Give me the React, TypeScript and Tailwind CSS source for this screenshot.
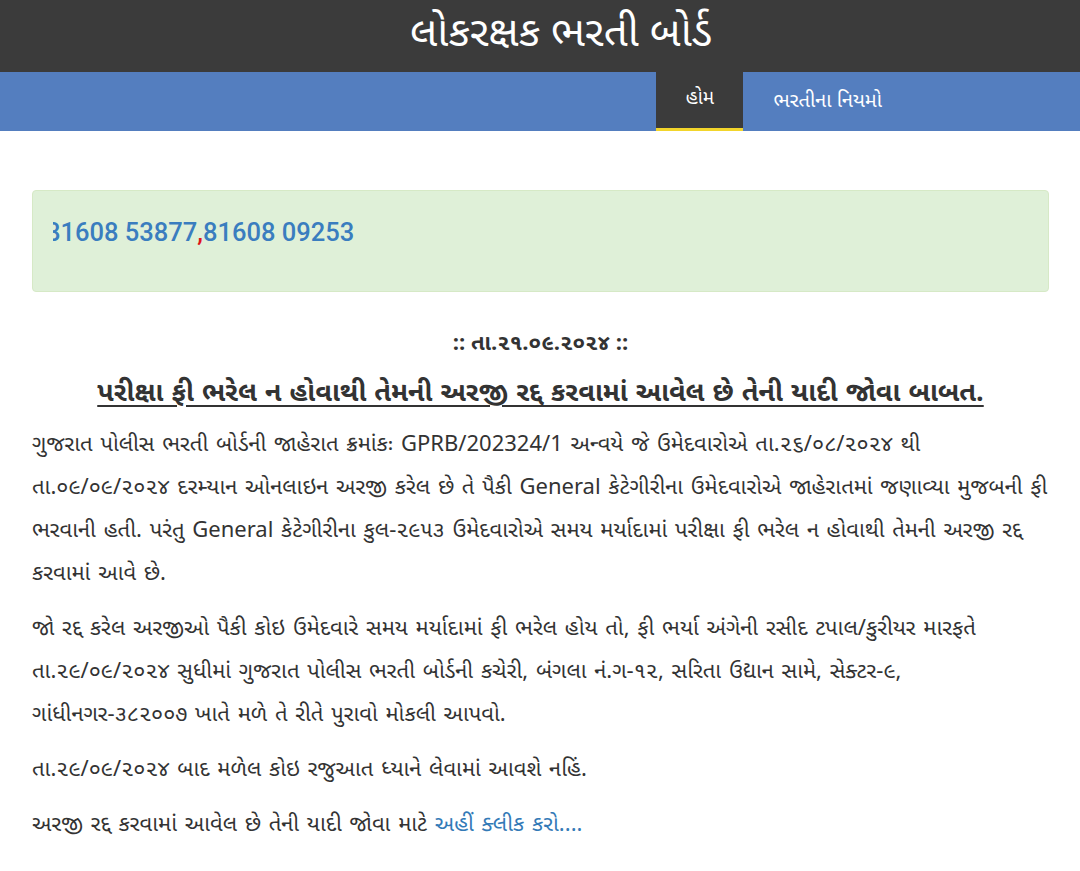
import React from 'react';

const font = "font-['Noto_Sans_Gujarati','Noto_Sans','Roboto',sans-serif]";

const App: React.FC = () => {
  return (
    <div className={`min-h-screen bg-white text-[#333] ${font}`}>
      {/* Title bar */}
      <header className="h-[72px] bg-[#3b3b3b] flex items-center justify-center pl-[42px]">
        <h1 className="text-white text-[42px] leading-none">લોકરક્ષક ભરતી બોર્ડ</h1>
      </header>

      {/* Nav */}
      <nav className="h-[59px] bg-[#547ebf] flex justify-end pr-[198px]">
        <a className="w-[87px] h-full bg-[#3b3b3b] border-b-[3px] border-[#f2d52b] flex items-center justify-center text-white text-[19px]">
          હોમ
        </a>
        <a className="h-full flex items-center pl-[30px] text-white text-[20px]">ભરતીના નિયમો</a>
      </nav>

      <main className="px-[32px] pt-[59px] pr-[31px]">
        {/* Marquee box */}
        <div className="h-[102px] bg-[#dff0d8] border border-[#d6e9c6] rounded-[4px] px-[20px] pt-[22px]">
          <div className="overflow-hidden whitespace-nowrap">
            <span className="inline-block -ml-[7px] font-['Roboto',sans-serif] font-medium text-[25.5px] text-[#3a7dbf]">
              81608 53877<span className="text-[#e0131b]">,</span>81608 09253
            </span>
          </div>
        </div>

        <p className="mt-[36px] text-center font-bold text-[22px]">:: તા.૨૧.૦૯.૨૦૨૪ ::</p>
        <h2 className="mt-[14px] text-center font-bold text-[27px] underline underline-offset-4 [word-spacing:1px]">
          પરીક્ષા ફી ભરેલ ન હોવાથી તેમની અરજી રદ્દ કરવામાં આવેલ છે તેની યાદી જોવા બાબત.
        </h2>

        <div className="mt-[8px] text-[22px] leading-[43px] space-y-[12px] [word-spacing:2px] whitespace-nowrap">
          <p>
            ગુજરાત પોલીસ ભરતી બોર્ડની જાહેરાત ક્રમાંકઃ GPRB/202324/1 અન્વયે જે ઉમેદવારોએ તા.૨૬/૦૮/૨૦૨૪ થી
            <br />
            તા.૦૯/૦૯/૨૦૨૪ દરમ્યાન ઓનલાઇન અરજી કરેલ છે તે પૈકી General કેટેગીરીના ઉમેદવારોએ જાહેરાતમાં જણાવ્યા મુજબની ફી
            <br />
            ભરવાની હતી. પરંતુ General કેટેગીરીના કુલ-૨૯૫૩ ઉમેદવારોએ સમય મર્યાદામાં પરીક્ષા ફી ભરેલ ન હોવાથી તેમની અરજી રદ્દ
            <br />
            કરવામાં આવે છે.
          </p>
          <p>
            જો રદ્દ કરેલ અરજીઓ પૈકી કોઇ ઉમેદવારે સમય મર્યાદામાં ફી ભરેલ હોય તો, ફી ભર્યા અંગેની રસીદ ટપાલ/કુરીયર મારફતે
            <br />
            તા.૨૯/૦૯/૨૦૨૪ સુધીમાં ગુજરાત પોલીસ ભરતી બોર્ડની કચેરી, બંગલા નં.ગ-૧૨, સરિતા ઉદ્યાન સામે, સેક્ટર-૯,
            <br />
            ગાંધીનગર-૩૮૨૦૦૭ ખાતે મળે તે રીતે પુરાવો મોકલી આપવો.
          </p>
          <p>તા.૨૯/૦૯/૨૦૨૪ બાદ મળેલ કોઇ રજુઆત ધ્યાને લેવામાં આવશે નહિં.</p>
          <p>
            અરજી રદ્દ કરવામાં આવેલ છે તેની યાદી જોવા માટે{' '}
            <a className="text-[#337ab7]">અહીં ક્લીક કરો....</a>
          </p>
        </div>
      </main>
    </div>
  );
};

export default App;
